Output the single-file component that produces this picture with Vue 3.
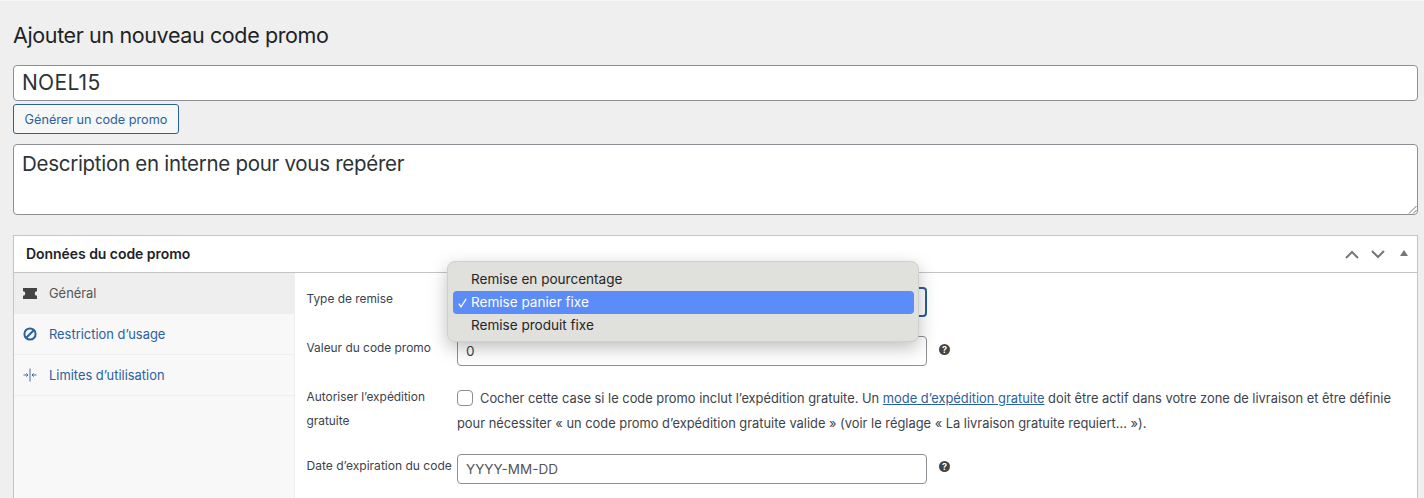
<script setup>
const tabs = [
  { label: 'Général', icon: 'ticket', active: true },
  { label: 'Restriction d’usage', icon: 'ban' },
  { label: 'Limites d’utilisation', icon: 'limit' }
]
</script>

<template>
  <div class="page">
    <h1 class="title">Ajouter un nouveau code promo</h1>
    <div class="big-field code">NOEL15</div>
    <button class="gen" type="button">Générer un code promo</button>
    <div class="big-field desc">
      Description en interne pour vous repérer
      <svg class="grip" width="9" height="9" viewBox="0 0 9 9"><path d="M1 8.500 8.500 1M5 8.500 8.500 5" stroke="#777" stroke-width="1" fill="none"/></svg>
    </div>

    <section class="panel">
      <header class="panel-head">
        <h2>Données du code promo</h2>
        <div class="controls">
          <svg width="14" height="9" viewBox="0 0 14 9"><path d="M1 8 7 2l6 6" fill="none" stroke="#72777c" stroke-width="2"/></svg>
          <svg width="14" height="9" viewBox="0 0 14 9"><path d="M1 1l6 6 6-6" fill="none" stroke="#72777c" stroke-width="2"/></svg>
          <svg class="tri" width="8" height="6" viewBox="0 0 8 6"><path d="M4 0l4 6H0z" fill="#72777c"/></svg>
        </div>
      </header>
      <div class="panel-body">
        <nav class="tabs">
          <a v-for="t in tabs" :key="t.label" class="tab" :class="{ active: t.active }">
            <svg v-if="t.icon === 'ticket'" class="ico" width="14" height="11" viewBox="0 0 14 11"><path d="M0 0h14v3.200a2.300 2.300 0 0 0 0 4.600V11H0V7.800a2.300 2.300 0 0 0 0-4.600z" fill="#444"/></svg>
            <svg v-else-if="t.icon === 'ban'" class="ico" width="14" height="14" viewBox="0 0 14 14"><circle cx="7" cy="7" r="5.600" fill="none" stroke="#2c5f9e" stroke-width="2"/><path d="M3.500 10.500l7-7" stroke="#2c5f9e" stroke-width="2"/></svg>
            <svg v-else class="ico" width="14" height="14" viewBox="0 0 14 14"><path d="M7 0.500v13M0.500 7h4.500M9 7h4.500M3.300 5.300 5 7 3.300 8.700M10.700 5.300 9 7l1.700 1.700" fill="none" stroke="#2c5f9e" stroke-width="0.900"/></svg>
            <span>{{ t.label }}</span>
          </a>
        </nav>

        <div class="form">
          <div class="row r-select">
            <label>Type de remise</label>
            <div class="select"></div>
          </div>
          <div class="row r-value">
            <label>Valeur du code promo</label>
            <div class="input">0</div>
            <span class="help">?</span>
          </div>
          <div class="row r-check">
            <label class="two">Autoriser l’expédition gratuite</label>
            <p class="check-text"><span class="box"></span>Cocher cette case si le code promo inclut l’expédition gratuite. Un <a>mode d’expédition gratuite</a> doit être actif dans votre zone de livraison et être définie pour nécessiter « un code promo d’expédition gratuite valide » (voir le réglage « La livraison gratuite requiert… »).</p>
          </div>
          <div class="row r-date">
            <label>Date d’expiration du code</label>
            <div class="input ph">YYYY-MM-DD</div>
            <span class="help">?</span>
          </div>
        </div>
      </div>
    </section>

    <ul class="dropdown">
      <li>Remise en pourcentage</li>
      <li class="sel">
        <svg class="tick" width="9" height="10" viewBox="0 0 9 10"><path d="M0.800 5.600 3 8.800 8.200 0.800" fill="none" stroke="#fff" stroke-width="1.300"/></svg>
        Remise panier fixe
      </li>
      <li>Remise produit fixe</li>
    </ul>
  </div>
</template>

<style>
html, body { margin: 0; overflow: hidden; background: #f0f0f0; }
</style>

<style scoped>
.page {
  position: relative;
  height: 498px;
  box-sizing: border-box;
  overflow: hidden;
  padding: 1px 6px 0 13px;
  background: #efefef;
  border-top: 1px solid #f7f7f7;
  font-family: Inter, "Liberation Sans", sans-serif;
  color: #2c3338;
}
.title { margin: 0; padding-top: 20px; font-size: 21.500px; line-height: 26px; font-weight: 400; color: #1d2327; letter-spacing: -0.380px; }
.big-field {
  box-sizing: border-box;
  background: #fff;
  border: 1px solid #8c8f94;
  border-radius: 4px;
  padding: 0 8px;
  font-size: 20.500px;
  color: #2c3338;
  position: relative;
}
.code { margin-top: 17px; height: 36px; line-height: 34px; font-size: 21px; letter-spacing: 0.300px; }
.gen {
  display: block;
  margin-top: 3px;
  width: 166px;
  height: 30px;
  padding: 0;
  background: #f6f7f7;
  border: 1px solid #2c5f9e;
  border-radius: 3px;
  color: #2c5f9e;
  font: 400 12.700px Inter, "Liberation Sans", sans-serif;
}
.desc { margin-top: 10px; height: 71px; line-height: 38px; letter-spacing: -0.280px; }
.grip { position: absolute; right: 0; bottom: 0; }
.panel {
  margin-top: 20px;
  background: #fff;
  border: 1px solid #c3c4c7;
  height: 300px;
}
.panel-head {
  height: 36px;
  display: flex;
  align-items: center;
  justify-content: space-between;
  padding: 0 9px 0 12px;
  border-bottom: 1px solid #c3c4c7;
}
.panel-head h2 { margin: 0 0 2px; font-size: 14px; font-weight: 600; color: #1d2327; letter-spacing: -0.050px; }
.controls { display: flex; align-items: center; gap: 12px; }
.controls .tri { margin-left: 3px; margin-top: -3px; }
.panel-body { display: flex; }
.tabs {
  width: 280px;
  height: 300px;
  flex: none;
  background: #f8f8f8;
  border-right: 1px solid #eee;
}
.tab {
  height: 40px;
  border-bottom: 1px solid #eee;
  display: flex;
  align-items: center;
  padding-left: 9px;
  font-size: 12.900px;
  color: #2c5f9e;
}
.tab .ico { width: 14px; margin-right: 12px; flex: none; }
.tab.active { background: #eee; color: #555; border-bottom-color: #eee; }
.form { flex: 1; padding: 14px 6px 0 11.500px; font-size: 11.900px; color: #3c434a; }
.row { display: flex; align-items: flex-start; }
.row label { width: 150.500px; flex: none; line-height: 24px; }
.select {
  width: 470px;
  height: 30px;
  box-sizing: border-box;
  border: 2px solid #2c5f9e;
  border-radius: 4px;
}
.input {
  width: 470px;
  height: 30px;
  box-sizing: border-box;
  border: 1px solid #8c8f94;
  border-radius: 4px;
  padding: 0 8px;
  line-height: 28px;
  font-size: 13.500px;
  background: #fff;
}
.ph { color: #555; }
.help {
  margin-left: 12px;
  margin-top: 8px;
  width: 11px;
  height: 11px;
  border-radius: 50%;
  background: #444;
  color: #fff;
  font-size: 9px;
  font-weight: 700;
  line-height: 11px;
  text-align: center;
}
.r-value { margin-top: 19px; }
.r-check { margin-top: 19px; }
.r-check .two { width: 128px; margin-right: 22.500px; line-height: 24px; }
.check-text { margin: 1px 0 0; line-height: 25px; font-size: 12.860px; width: 940px; }
.check-text a { color: #2c5f9e; text-decoration: underline; }
.box {
  display: inline-block;
  box-sizing: border-box;
  width: 16px;
  height: 16px;
  border: 1px solid #8c8f94;
  border-radius: 4px;
  background: #fff;
  margin-right: 7px;
  vertical-align: -3px;
}
.r-date { margin-top: 18px; }
.r-date label { line-height: 24px; white-space: nowrap; font-size: 12.050px; }
.r-date .help { margin-top: 7px; }
.dropdown {
  position: absolute;
  left: 447px;
  top: 260px;
  width: 472px;
  height: 81px;
  box-sizing: border-box;
  margin: 0;
  padding: 6px 4px 6px 5px;
  list-style: none;
  background: #e0e0dd;
  border: 1px solid #cfcfcc;
  border-radius: 8px;
  box-shadow: 0 6px 18px rgba(0, 0, 0, 0.25);
  font-size: 13.550px;
  color: #262626;
}
.dropdown li { position: relative; height: 23px; line-height: 23px; padding-left: 18px; border-radius: 4px; }
.sel { background: #5b8cf8; color: #fff; }
.tick { position: absolute; left: 5px; top: 7px; }
</style>
